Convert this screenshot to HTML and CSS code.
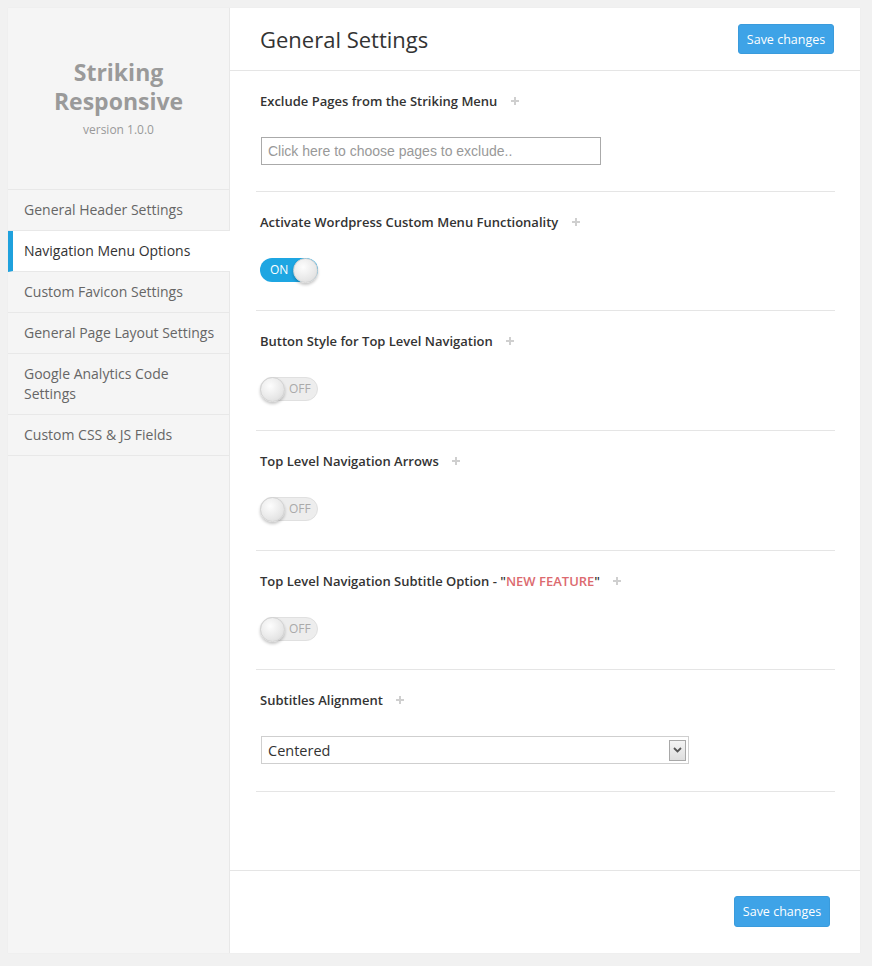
FILE: index.html
```html
<!DOCTYPE html>
<html>
<head>
<meta charset="utf-8">
<link rel="stylesheet" href="styles.css">
</head>
<body>
<div class="panel">
  <aside class="sidebar">
    <div class="brand">
      <div class="brand-name">Striking</div>
      <div class="brand-name">Responsive</div>
      <div class="brand-version">version 1.0.0</div>
    </div>
    <ul class="nav">
      <li class="nav-item">General Header Settings</li>
      <li class="nav-item active">Navigation Menu Options</li>
      <li class="nav-item">Custom Favicon Settings</li>
      <li class="nav-item">General Page Layout Settings</li>
      <li class="nav-item">Google Analytics Code<br>Settings</li>
      <li class="nav-item">Custom CSS &amp; JS Fields</li>
    </ul>
  </aside>
  <main class="main">
    <header class="main-header">
      <h1 class="title">General Settings</h1>
      <button class="btn">Save changes</button>
    </header>
    <div class="sections">
      <section class="section">
        <div class="label">Exclude Pages from the Striking Menu <svg class="plus" width="8" height="8" viewBox="0 0 8 8"><path d="M4 0V8M0 4H8" stroke="#cfcfcf" stroke-width="2"/></svg></div>
        <div class="text-input">Click here to choose pages to exclude..</div>
      </section>
      <section class="section">
        <div class="label">Activate Wordpress Custom Menu Functionality <svg class="plus" width="8" height="8" viewBox="0 0 8 8"><path d="M4 0V8M0 4H8" stroke="#cfcfcf" stroke-width="2"/></svg></div>
        <div class="toggle on"><span class="toggle-text">ON</span><span class="knob"></span></div>
      </section>
      <section class="section tall">
        <div class="label">Button Style for Top Level Navigation <svg class="plus" width="8" height="8" viewBox="0 0 8 8"><path d="M4 0V8M0 4H8" stroke="#cfcfcf" stroke-width="2"/></svg></div>
        <div class="toggle off"><span class="knob"></span><span class="toggle-text">OFF</span></div>
      </section>
      <section class="section tall">
        <div class="label">Top Level Navigation Arrows <svg class="plus" width="8" height="8" viewBox="0 0 8 8"><path d="M4 0V8M0 4H8" stroke="#cfcfcf" stroke-width="2"/></svg></div>
        <div class="toggle off"><span class="knob"></span><span class="toggle-text">OFF</span></div>
      </section>
      <section class="section">
        <div class="label">Top Level Navigation Subtitle Option - "<span class="new">NEW FEATURE</span>" <svg class="plus" width="8" height="8" viewBox="0 0 8 8"><path d="M4 0V8M0 4H8" stroke="#cfcfcf" stroke-width="2"/></svg></div>
        <div class="toggle off"><span class="knob"></span><span class="toggle-text">OFF</span></div>
      </section>
      <section class="section last">
        <div class="label">Subtitles Alignment <svg class="plus" width="8" height="8" viewBox="0 0 8 8"><path d="M4 0V8M0 4H8" stroke="#cfcfcf" stroke-width="2"/></svg></div>
        <div class="select">
          <span class="select-value">Centered</span>
          <span class="select-arrow"><svg width="9" height="6" viewBox="0 0 9 6"><path d="M1 1L4.5 4.5L8 1" fill="none" stroke="#555" stroke-width="1.8"/></svg></span>
        </div>
      </section>
    </div>
    <footer class="main-footer">
      <button class="btn btn-footer">Save changes</button>
    </footer>
  </main>
</div>
</body>
</html>
```

FILE: styles.css
```css
html, body {
  margin: 0;
  padding: 0;
}
body {
  background: #f1f1f1;
  padding: 8px 12px 13px 8px;
  font-family: "Open Sans", "Liberation Sans", sans-serif;
  color: #333;
}
.panel {
  display: flex;
  width: 852px;
  height: 945px;
  background: #fff;
  box-shadow: 0 0 1px rgba(0,0,0,0.06);
}
.sidebar {
  width: 221px;
  flex: 0 0 221px;
  background: #f5f5f5;
  border-right: 1px solid #e8e8e8;
}
.brand {
  height: 181px;
  box-sizing: border-box;
  padding-top: 50px;
  text-align: center;
}
.brand-name {
  font-size: 23px;
  line-height: 29px;
  font-weight: 700;
  color: #9a9a9a;
}
.brand-version {
  margin-top: 6px;
  font-size: 12px;
  line-height: 16px;
  color: #999;
}
.nav {
  list-style: none;
  margin: 0;
  padding: 0;
  border-top: 1px solid #e8e8e8;
}
.nav-item {
  padding: 10px 4px 10px 16px;
  font-size: 14px;
  line-height: 20px;
  color: #666;
  border-bottom: 1px solid #e8e8e8;
  white-space: nowrap;
}
.nav-item.active {
  background: #fff;
  color: #333;
  margin-right: -1px;
  border-left: 5px solid #1fa1dd;
  padding-left: 11px;
}
.main {
  flex: 1;
  display: flex;
  flex-direction: column;
  min-width: 0;
}
.main-header {
  height: 62px;
  border-bottom: 1px solid #e5e5e5;
  display: flex;
  align-items: center;
  justify-content: space-between;
  padding: 0 26px 0 30px;
}
.title {
  margin: 0;
  font-size: 22px;
  font-weight: 400;
  color: #333;
}
.btn {
  font-family: "Open Sans", "Liberation Sans", sans-serif;
  width: 96px;
  height: 30px;
  padding: 0;
  font-size: 12.5px;
  color: #fff;
  background: #3ea3e7;
  border: 1px solid #3a9bdc;
  border-radius: 3px;
}
.btn-footer {
  height: 31px;
}
.sections {
  flex: 1;
  padding: 0 25px 0 26px;
}
.section {
  border-bottom: 1px solid #e5e5e5;
  padding: 21px 4px 28px;
}
.section:first-child {
  padding-bottom: 26px;
}
.section.tall {
  padding-bottom: 29px;
}
.section.last {
  padding-bottom: 27px;
}
.label {
  font-size: 13px;
  line-height: 18px;
  font-weight: 600;
  color: #333;
  display: flex;
  align-items: center;
  white-space: pre;
}
.plus {
  margin-left: 10px;
}
.new {
  color: #dc6a6f;
  font-weight: 600;
}
.text-input {
  margin-top: 27px;
  margin-left: 1px;
  width: 340px;
  height: 28px;
  box-sizing: border-box;
  border: 1px solid #aaa;
  padding: 0 6px;
  font-family: "Liberation Sans", Arial, sans-serif;
  font-size: 14px;
  line-height: 26px;
  color: #999;
}
.toggle {
  margin-top: 27px;
  width: 58px;
  height: 24px;
  box-sizing: border-box;
  border-radius: 12px;
  display: flex;
  align-items: center;
}
.toggle.on {
  background: #1ea6e2;
  padding-left: 10px;
  justify-content: space-between;
}
.toggle.off {
  background: #ededed;
  border: 1px solid #e0e0e0;
  gap: 4px;
}
.toggle-text {
  font-size: 12px;
  line-height: 14px;
}
.toggle.on .toggle-text {
  color: #fff;
}
.toggle.off .toggle-text {
  color: #aaa;
}
.knob {
  width: 25px;
  height: 25px;
  border-radius: 50%;
  box-sizing: border-box;
  background: radial-gradient(circle at 40% 35%, #fdfdfd 0%, #e8e8e8 60%, #d6d6d6 100%);
  border: 1px solid #d2d2d2;
  box-shadow: 0 2px 3px rgba(0,0,0,0.22);
  margin: -1px 0;
}
.toggle.off .knob {
  margin-left: -1px;
}
.select {
  margin-top: 27px;
  margin-left: 1px;
  width: 428px;
  height: 28px;
  box-sizing: border-box;
  border: 1px solid #cfcfcf;
  display: flex;
  align-items: center;
  justify-content: space-between;
  padding: 0 2px 0 6px;
}
.select-value {
  font-size: 14.5px;
  color: #333;
}
.select-arrow {
  width: 17px;
  height: 21px;
  box-sizing: border-box;
  border: 1px solid #a8a8a8;
  background: linear-gradient(#f4f4f4, #dedede);
  display: flex;
  align-items: center;
  justify-content: center;
}
.main-footer {
  height: 83px;
  border-top: 1px solid #e5e5e5;
  display: flex;
  justify-content: flex-end;
  align-items: flex-start;
  padding: 25px 30px 0 0;
  box-sizing: border-box;
}
```
